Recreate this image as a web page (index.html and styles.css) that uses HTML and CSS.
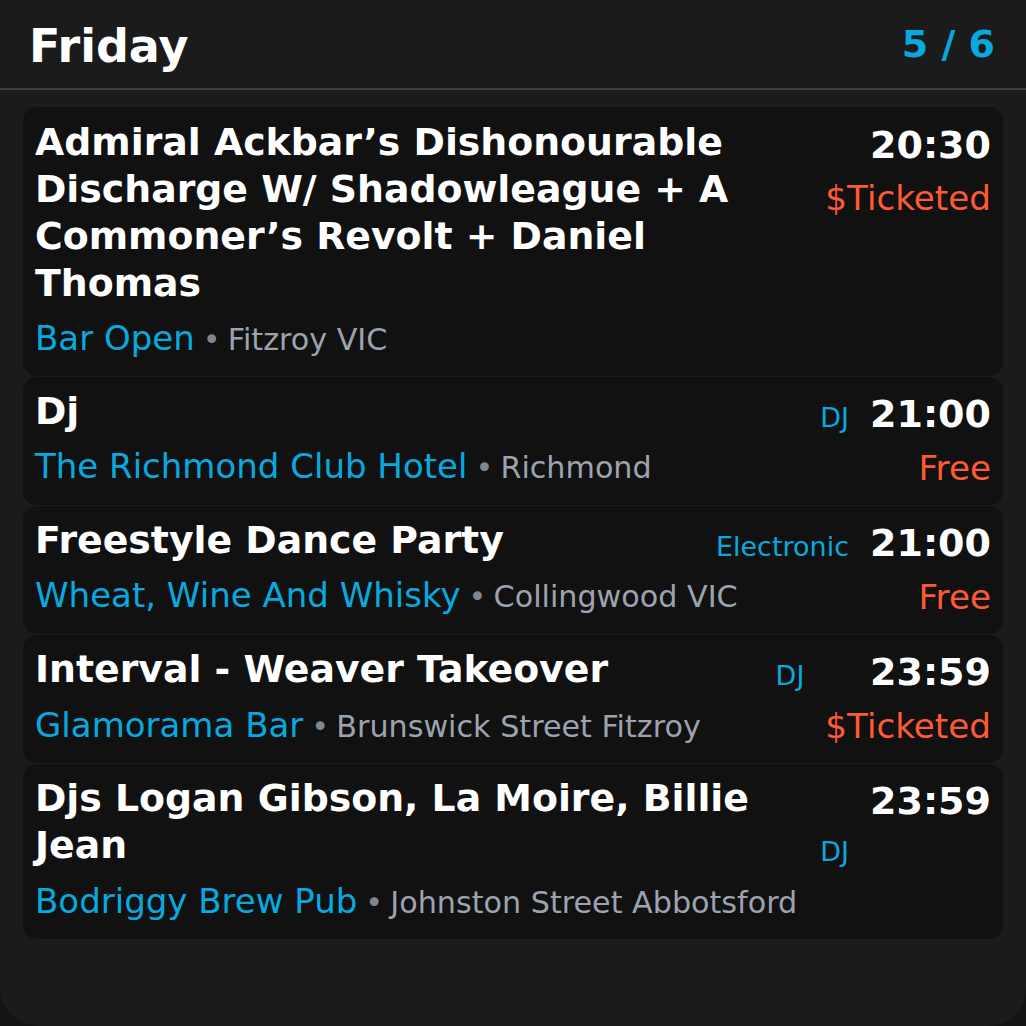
FILE: index.html
```html
<!DOCTYPE html>
<html>
<head>
<meta charset="utf-8">
<link rel="stylesheet" href="styles.css">
</head>
<body>
<div class="widget">
  <header class="header">
    <div class="day">Friday</div>
    <div class="count">5 / 6</div>
  </header>
  <div class="list">
    <div class="card">
      <div class="main">
        <div class="top">
          <div class="title">Admiral Ackbar’s Dishonourable Discharge W/ Shadowleague + A Commoner’s Revolt + Daniel Thomas</div>
        </div>
        <div class="where"><span class="venue">Bar Open</span><span class="sep">•</span><span class="loc">Fitzroy VIC</span></div>
      </div>
      <div class="side">
        <div class="time">20:30</div>
        <div class="price">$Ticketed</div>
      </div>
    </div>
    <div class="card">
      <div class="main">
        <div class="top">
          <div class="title">Dj</div>
          <div class="genre">DJ</div>
        </div>
        <div class="where"><span class="venue">The Richmond Club Hotel</span><span class="sep">•</span><span class="loc">Richmond</span></div>
      </div>
      <div class="side">
        <div class="time">21:00</div>
        <div class="price">Free</div>
      </div>
    </div>
    <div class="card">
      <div class="main">
        <div class="top">
          <div class="title">Freestyle Dance Party</div>
          <div class="genre">Electronic</div>
        </div>
        <div class="where"><span class="venue">Wheat, Wine And Whisky</span><span class="sep">•</span><span class="loc">Collingwood VIC</span></div>
      </div>
      <div class="side">
        <div class="time">21:00</div>
        <div class="price">Free</div>
      </div>
    </div>
    <div class="card">
      <div class="main">
        <div class="top">
          <div class="title">Interval - Weaver Takeover</div>
          <div class="genre">DJ</div>
        </div>
        <div class="where"><span class="venue">Glamorama Bar</span><span class="sep">•</span><span class="loc">Brunswick Street Fitzroy</span></div>
      </div>
      <div class="side">
        <div class="time">23:59</div>
        <div class="price">$Ticketed</div>
      </div>
    </div>
    <div class="card">
      <div class="main">
        <div class="top">
          <div class="title">Djs Logan Gibson, La Moire, Billie Jean</div>
          <div class="genre">DJ</div>
        </div>
        <div class="where"><span class="venue">Bodriggy Brew Pub</span><span class="sep">•</span><span class="loc">Johnston Street Abbotsford</span></div>
      </div>
      <div class="side">
        <div class="time">23:59</div>
      </div>
    </div>
  </div>
</div>
</body>
</html>
```
FILE: styles.css
```css
html, body {
  margin: 0;
  padding: 0;
  background: #141414;
}
body {
  font-family: "DejaVu Sans", "Liberation Sans", sans-serif;
}
.widget {
  height: 1026px;
  box-sizing: border-box;
  background: #1b1b1b;
  border-radius: 0 0 38px 38px;
  overflow: hidden;
}
.header {
  height: 88px;
  display: flex;
  align-items: center;
  justify-content: space-between;
  padding: 0 31px 0 29px;
  border-bottom: 2px solid #3a3f4a;
}
.day {
  color: #ffffff;
  font-weight: bold;
  font-size: 46px;
  line-height: 54px;
  padding-top: 4px;
}
.count {
  color: #08a9df;
  font-weight: bold;
  font-size: 38px;
  line-height: 44px;
}
.list {
  padding: 17px 23px 0;
  display: flex;
  flex-direction: column;
  gap: 1px;
}
.card {
  background: #111111;
  border-radius: 14px;
  padding: 11.5px 12px 16px;
  display: flex;
  align-items: flex-start;
  box-shadow: 0 4px 18px rgba(255, 255, 255, 0.012);
}
.main {
  flex: 1;
  min-width: 0;
}
.top {
  display: flex;
  align-items: flex-end;
  gap: 16px;
}
.title {
  flex: 1;
  min-width: 0;
  color: #ffffff;
  font-weight: bold;
  font-size: 37.8px;
  line-height: 47px;
}
.genre {
  color: #08a9df;
  font-size: 27px;
  line-height: 34.5px;
  white-space: nowrap;
}
.where {
  margin-top: 9.2px;
  font-size: 34px;
  line-height: 44px;
  white-space: nowrap;
}
.venue {
  color: #08a9df;
}
.sep {
  color: #80868f;
  font-size: 30.2px;
  line-height: 1;
  margin: 0 7.2px 0 8px;
}
.loc {
  color: #9ca3af;
  font-size: 30.2px;
  line-height: 1;
}
.side {
  margin-left: 21px;
  text-align: right;
  white-space: nowrap;
}
.time {
  color: #ffffff;
  font-weight: bold;
  font-size: 38px;
  line-height: 52px;
}
.price {
  color: #ff5a36;
  font-size: 34.2px;
  line-height: 42px;
  margin-top: 6.6px;
}
```
